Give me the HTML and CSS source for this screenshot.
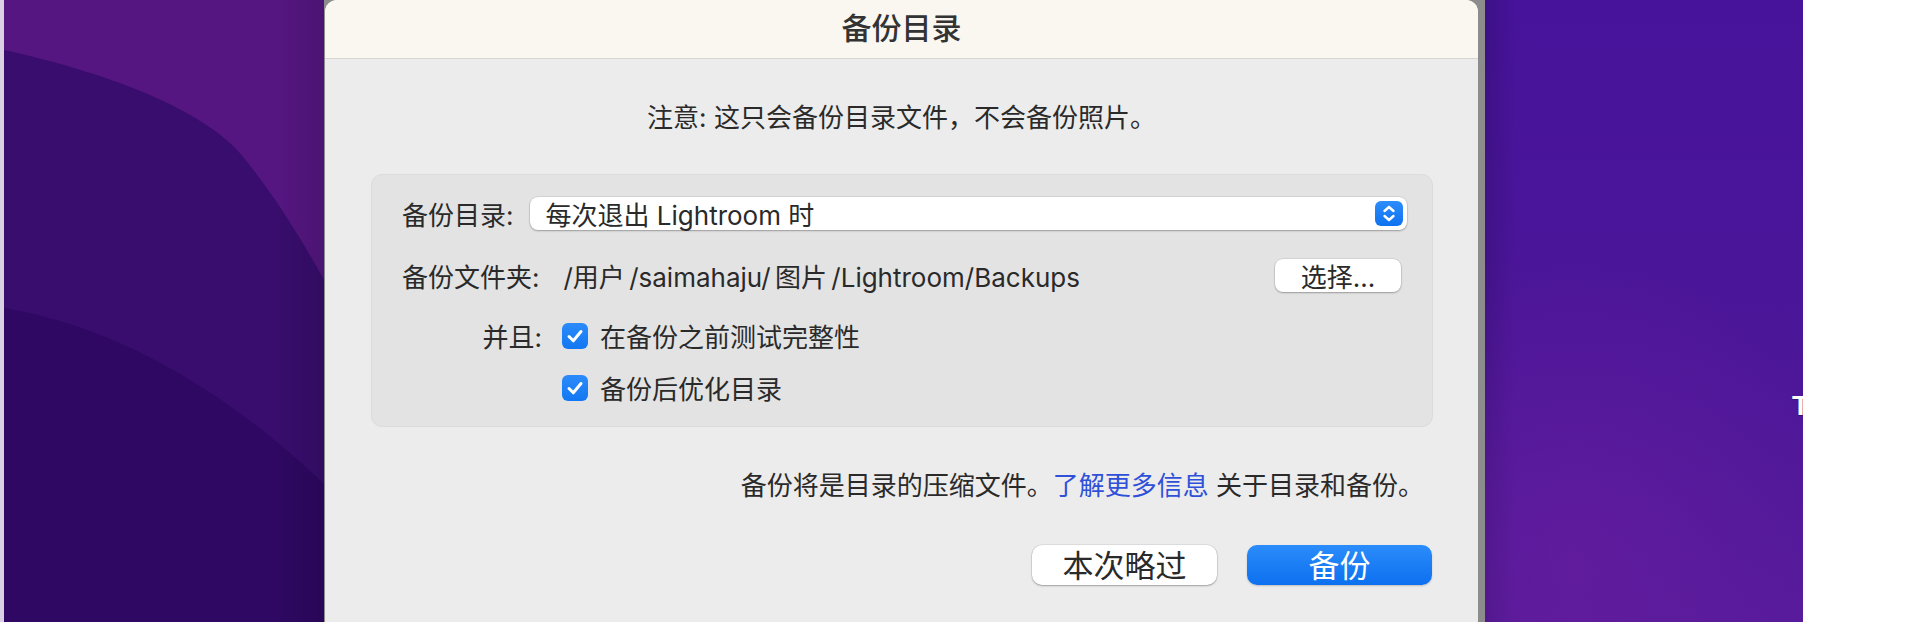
FILE: index.html
```html
<!DOCTYPE html>
<html lang="zh-CN">
<head>
<meta charset="utf-8">
<title>备份目录</title>
<link rel="stylesheet" href="styles.css">
</head>
<body>
  <div class="strip"></div>
  <div class="wall-left">
    <svg width="320" height="622" viewBox="0 0 320 622" class="wall-svg">
      <defs>
        <linearGradient id="shade" x1="0" x2="1" y1="0" y2="0">
          <stop offset="0.85" stop-color="#000" stop-opacity="0"/>
          <stop offset="1" stop-color="#000" stop-opacity="0.12"/>
        </linearGradient>
      </defs>
      <rect width="320" height="622" fill="#551681"/>
      <path d="M0 50 C100 72 200 108 240 158 C272 198 298 240 320 280 L320 622 L0 622 Z" fill="#380d6d"/>
      <path d="M0 308 C120 328 230 398 320 484 L320 622 L0 622 Z" fill="#2e0862"/>
      <rect width="320" height="622" fill="url(#shade)"/>
    </svg>
  </div>
  <div class="dialog-wrap">
    <div class="dialog">
      <div class="titlebar">备份目录</div>
      <p class="note">注意: 这只会备份目录文件，不会备份照片。</p>
      <div class="panel">
        <div class="row row-select">
          <span class="label label-catalog">备份目录:</span>
          <div class="select">
            <span class="select-text">每次退出 Lightroom 时</span>
            <span class="stepper">
              <svg width="28" height="25" viewBox="0 0 28 25">
                <path d="M9.5 10 L14 6 L18.5 10" fill="none" stroke="#fff" stroke-width="2.4" stroke-linecap="round" stroke-linejoin="round"/>
                <path d="M9.5 15 L14 19 L18.5 15" fill="none" stroke="#fff" stroke-width="2.4" stroke-linecap="round" stroke-linejoin="round"/>
              </svg>
            </span>
          </div>
        </div>
        <div class="row row-folder">
          <span class="label">备份文件夹:</span>
          <span class="path">/用户 /saimahaju/ 图片 /Lightroom/Backups</span>
          <span class="choose">选择...</span>
        </div>
        <div class="row row-check">
          <span class="label label-and">并且:</span>
          <span class="checkbox">
            <svg width="26" height="26" viewBox="0 0 26 26">
              <path d="M7 13.5 L11.3 17.8 L19 8.5" fill="none" stroke="#fff" stroke-width="3" stroke-linecap="round" stroke-linejoin="round"/>
            </svg>
          </span>
          <span class="check-text">在备份之前测试完整性</span>
        </div>
        <div class="row row-check row-indent">
          <span class="checkbox">
            <svg width="26" height="26" viewBox="0 0 26 26">
              <path d="M7 13.5 L11.3 17.8 L19 8.5" fill="none" stroke="#fff" stroke-width="3" stroke-linecap="round" stroke-linejoin="round"/>
            </svg>
          </span>
          <span class="check-text">备份后优化目录</span>
        </div>
      </div>
      <p class="info">备份将是目录的压缩文件。<a class="link">了解更多信息</a> 关于目录和备份。</p>
      <div class="buttons">
        <span class="btn btn-skip">本次略过</span>
        <span class="btn btn-primary">备份</span>
      </div>
    </div>
  </div>
  <div class="wall-right"><span class="wall-t">T</span></div>
  <div class="white"></div>
</body>
</html>
```

FILE: styles.css
```css
* { box-sizing: border-box; }

html, body {
  margin: 0;
  padding: 0;
}

body {
  width: 1920px;
  height: 622px;
  overflow: hidden;
  display: flex;
  background: #ffffff;
  font-family: Inter, "Noto Sans CJK SC", sans-serif;
  color: #2a2a2a;
}

.strip {
  flex: none;
  width: 4px;
  background: #d9d1e3;
}

.wall-left {
  flex: none;
  width: 320px;
  height: 622px;
}

.wall-svg { display: block; }

.dialog-wrap {
  flex: none;
  width: 1161px;
  height: 622px;
  background: #8c8c8c;
  padding-left: 1px;
}

.dialog {
  width: 1153px;
  height: 632px;
  background: #ececec;
  border-radius: 12px;
  overflow: hidden;
  display: flex;
  flex-direction: column;
}

.titlebar {
  flex: none;
  height: 59px;
  background: #faf7f1;
  border-bottom: 1px solid #d8d5d0;
  display: flex;
  align-items: center;
  justify-content: center;
  font-size: 30px;
  font-weight: 500;
  color: #333333;
  padding-bottom: 6px;
}

.note {
  margin: 41px 0 0;
  text-align: center;
  font-size: 26px;
  line-height: 36px;
}

.panel {
  margin: 38px 45px 0 46px;
  background: #e3e3e3;
  border: 1px solid #dbdbdb;
  border-radius: 11px;
  padding: 22px 25px 22px 30px;
  display: flex;
  flex-direction: column;
}

.row {
  display: flex;
  align-items: center;
  height: 33px;
  font-size: 26px;
}

.row-folder { margin-top: 29px; }
.row-check { margin-top: 27px; }
.row-indent { margin-top: 19px; padding-left: 160px; }

.label { flex: none; white-space: nowrap; }
.label-catalog { margin-right: 16px; }

.select {
  flex: 1;
  height: 33px;
  background: #ffffff;
  border-radius: 8px;
  box-shadow: 0 1px 2px rgba(0,0,0,0.28), 0 0 0 0.5px rgba(0,0,0,0.12);
  display: flex;
  align-items: center;
  padding-left: 16px;
  padding-right: 4px;
}

.select-text { flex: 1; white-space: nowrap; }

.stepper {
  flex: none;
  width: 28px;
  height: 25px;
  border-radius: 6px;
  background: linear-gradient(#2e8dfb, #0e72f0);
  display: flex;
}

.path {
  margin-left: 24px;
  flex: 1;
  white-space: nowrap;
  word-spacing: -3px;
}

.choose {
  flex: none;
  width: 126px;
  height: 33px;
  margin-right: 6px;
  background: #ffffff;
  border-radius: 8px;
  box-shadow: 0 1px 2px rgba(0,0,0,0.28), 0 0 0 0.5px rgba(0,0,0,0.12);
  display: flex;
  align-items: center;
  justify-content: center;
  font-size: 26px;
}

.label-and {
  width: 140px;
  text-align: right;
  margin-right: 20px;
}

.checkbox {
  flex: none;
  width: 26px;
  height: 26px;
  border-radius: 6px;
  background: linear-gradient(#2b8bfa, #1277f2);
  display: flex;
}

.check-text {
  margin-left: 12px;
  white-space: nowrap;
}

.info {
  margin: 41px 0 0;
  padding-right: 54px;
  text-align: right;
  font-size: 26px;
  line-height: 36px;
}

.link { color: #2f50d8; }

.buttons {
  margin-top: 41px;
  padding-right: 46px;
  display: flex;
  justify-content: flex-end;
  gap: 30px;
}

.btn {
  width: 185px;
  height: 40px;
  border-radius: 10px;
  display: flex;
  align-items: center;
  justify-content: center;
  font-size: 31px;
  padding-bottom: 4px;
}

.btn-skip {
  background: #ffffff;
  color: #2a2a2a;
  box-shadow: 0 1px 2px rgba(0,0,0,0.28), 0 0 0 0.5px rgba(0,0,0,0.12);
}

.btn-primary {
  background: linear-gradient(#2b8cfb, #0d70ef);
  color: #ffffff;
  box-shadow: 0 1px 2px rgba(0,0,0,0.2);
}

.wall-right {
  flex: none;
  width: 318px;
  height: 622px;
  overflow: hidden;
  background:
    radial-gradient(ellipse 260px 320px at 90px 560px, rgba(110,30,160,0.45), rgba(110,30,160,0) 100%),
    linear-gradient(90deg, rgba(40,10,90,0.3) 0px, rgba(40,10,90,0) 30px),
    linear-gradient(#46139a, #4c1699 55%, #561b9b);
  padding: 392px 0 0 307px;
}

.wall-t {
  display: block;
  color: #ffffff;
  font-family: "Liberation Sans", Arial, sans-serif;
  font-weight: 700;
  font-size: 28px;
  line-height: 28px;
  text-shadow: 0 1px 1px rgba(0,0,0,0.3);
}

.white {
  flex: 1;
  background: #ffffff;
}
```
